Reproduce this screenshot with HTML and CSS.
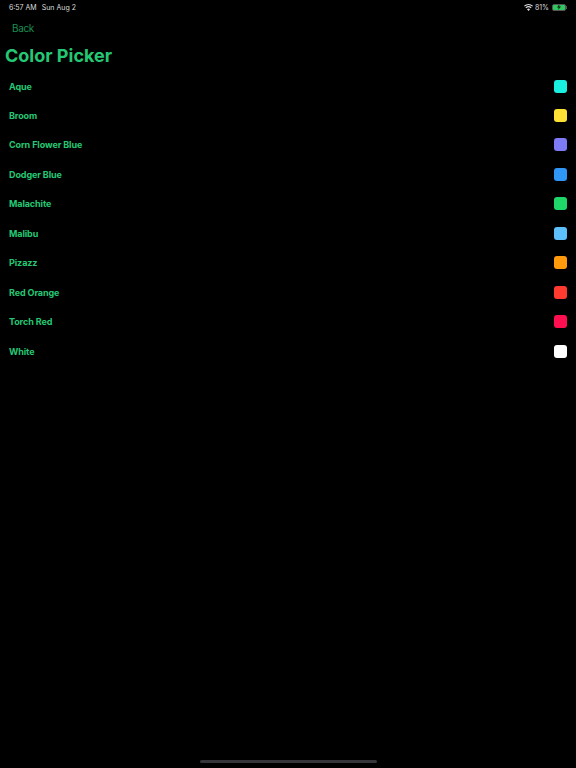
FILE: index.html
```html
<!DOCTYPE html>
<html lang="en">
<head>
    <meta charset="UTF-8">
    <meta name="viewport" content="width=device-width, initial-scale=1.0">
    <title>Color Picker</title>
    <link rel="stylesheet" href="styles.css">
</head>
<body>
    <div class="app">
        <div class="status-bar">
            <div class="status-left">
                <span>6:57 AM</span>
                <span>Sun Aug 2</span>
            </div>
            <div class="status-right">
                <svg class="wifi" width="9" height="7" viewBox="0 0 18 14">
                    <path d="M9 14 L6 10.5 A4.5 4.5 0 0 1 12 10.5 Z" fill="#ddd"/>
                    <path d="M4.4 8.6 A7 7 0 0 1 13.6 8.6 L15.2 6.8 A9.6 9.6 0 0 0 2.8 6.8 Z" fill="#ddd"/>
                    <path d="M1.4 5.2 A11.4 11.4 0 0 1 16.6 5.2 L18 3.5 A14 14 0 0 0 0 3.5 Z" fill="#ddd"/>
                </svg>
                <span>81%</span>
                <div class="battery">
                    <div class="battery-body">
                        <svg width="6" height="6" viewBox="0 0 6 6">
                            <path d="M3.6 0 L1 3.4 H2.7 L2.2 6 L5 2.4 H3.2 Z" fill="#06240f"/>
                        </svg>
                    </div>
                    <div class="battery-tip"></div>
                </div>
            </div>
        </div>

        <div class="nav"><a class="back">Back</a></div>
        <h1 class="title">Color Picker</h1>

        <ul class="color-list">
            <li class="color-row"><span>Aque</span><i class="swatch aqua"></i></li>
            <li class="color-row"><span>Broom</span><i class="swatch broom"></i></li>
            <li class="color-row"><span>Corn Flower Blue</span><i class="swatch cornflower"></i></li>
            <li class="color-row"><span>Dodger Blue</span><i class="swatch dodger"></i></li>
            <li class="color-row"><span>Malachite</span><i class="swatch malachite"></i></li>
            <li class="color-row"><span>Malibu</span><i class="swatch malibu"></i></li>
            <li class="color-row"><span>Pizazz</span><i class="swatch pizazz"></i></li>
            <li class="color-row"><span>Red Orange</span><i class="swatch red-orange"></i></li>
            <li class="color-row"><span>Torch Red</span><i class="swatch torch"></i></li>
            <li class="color-row"><span>White</span><i class="swatch white"></i></li>
        </ul>

        <div class="home-bar"><div class="home-indicator"></div></div>
    </div>
</body>
</html>
```

FILE: styles.css
```css
html, body {
    margin: 0;
    padding: 0;
    background: #000;
}
.app {
    width: 576px;
    height: 768px;
    display: flex;
    flex-direction: column;
    font-family: 'Inter', 'Liberation Sans', sans-serif;
    color: #24c874;
    overflow: hidden;
}
.status-bar {
    height: 14px;
    padding: 0 9px;
    display: flex;
    justify-content: space-between;
    align-items: center;
    font-size: 7px;
    color: #ddd;
}
.status-left {
    display: flex;
    gap: 5px;
}
.status-right {
    display: flex;
    align-items: center;
    gap: 2px;
}
.battery {
    display: flex;
    align-items: center;
    margin-left: 1px;
}
.battery-body {
    width: 12px;
    height: 5px;
    background: #2fc85f;
    border: 1px solid #555;
    border-radius: 2px;
    display: flex;
    justify-content: center;
    align-items: center;
    overflow: hidden;
}
.battery-tip {
    width: 1px;
    height: 3px;
    background: #555;
}
.nav {
    height: 27px;
    padding-left: 12px;
    display: flex;
    align-items: center;
}
.back {
    font-size: 10px;
    letter-spacing: -0.35px;
    color: #1a8f52;
}
.title {
    margin: 0 0 2.4px;
    padding: 2px 0 0 5px;
    font-size: 18px;
    line-height: 26px;
    font-weight: 700;
    color: #24c874;
}
.color-list {
    list-style: none;
    margin: 0;
    padding: 0 9px;
}
.color-row {
    height: 29.45px;
    display: flex;
    justify-content: space-between;
    align-items: center;
    font-size: 9px;
    font-weight: 700;
    letter-spacing: -0.1px;
}
.swatch {
    width: 13px;
    height: 13px;
    border-radius: 3px;
}
.aqua { background: #1af0e0; }
.broom { background: #ffe135; }
.cornflower { background: #7d7bf5; }
.dodger { background: #2f96f5; }
.malachite { background: #1fd768; }
.malibu { background: #5ec0fa; }
.pizazz { background: #ff9a0d; }
.red-orange { background: #ff3b30; }
.torch { background: #ff0f50; }
.white { background: #fff; }
.home-bar {
    margin-top: auto;
    height: 8px;
    display: flex;
    justify-content: center;
}
.home-indicator {
    width: 177px;
    height: 3px;
    border-radius: 2px;
    background: #36363a;
}
```
